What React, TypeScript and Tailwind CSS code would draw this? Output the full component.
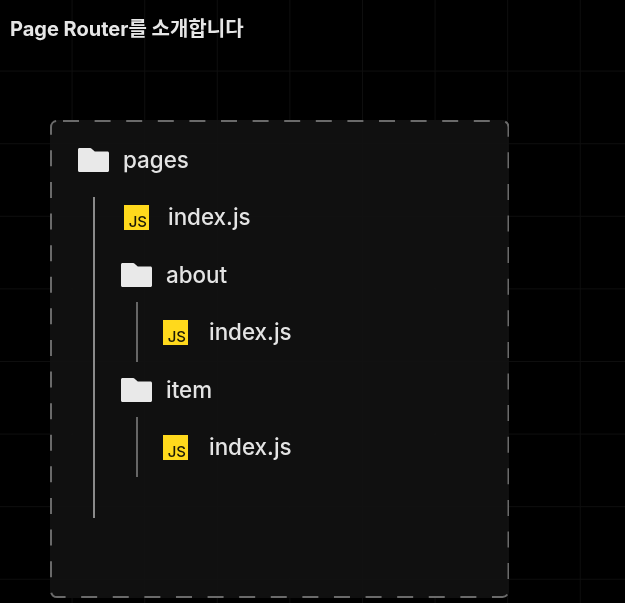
import React from "react";

function Folder() {
  return (
    <svg width="31" height="24" viewBox="0 0 31 24" className="shrink-0">
      <path d="M1.5 0H12C12.8 0 13.4 .3 13.9 .9L16.8 3.6H29.5C30.3 3.6 31 4.3 31 5.1V22.5C31 23.3 30.3 24 29.5 24H1.5C.7 24 0 23.3 0 22.5V1.5C0 .7 .7 0 1.5 0Z" fill="#e9e9e9" />
    </svg>
  );
}

function JsIcon() {
  return (
    <div className="w-[25px] h-[25px] shrink-0 bg-[#ffd91c] flex items-end justify-end pr-[2px] pb-[1px]">
      <span className="text-[#1c1a08] text-[15px] leading-[15px] font-medium">JS</span>
    </div>
  );
}

function FolderRow({ name, className }: { name: string; className: string }) {
  return (
    <div className={`h-10 flex items-center ${className}`}>
      <Folder />
      <span>{name}</span>
    </div>
  );
}

function FileRow({ className }: { className: string }) {
  return (
    <div className={`h-10 flex items-center ${className}`}>
      <JsIcon />
      <span>index.js</span>
    </div>
  );
}

function SubBranch({ className }: { className: string }) {
  return (
    <div className={`ml-[41px] py-[10px] border-l-2 border-[#666666] ${className}`}>
      <FileRow className="pl-[25px] gap-[21px]" />
    </div>
  );
}

export default function App() {
  return (
    <div
      className="w-[625px] h-[603px] overflow-hidden bg-black bg-[linear-gradient(to_right,#0e0e0e_1px,transparent_1px),linear-gradient(to_bottom,#0e0e0e_1px,transparent_1px)] bg-[size:72.6px_72.6px] bg-[position:-1px_-2px] text-[#e4e4e4] text-[22.4px] font-medium font-['Inter','Noto_Sans_CJK_KR',sans-serif] blur-[0.5px]"
    >
      <h1 className="pl-[10px] pt-[17px] h-[120px] text-[20px] leading-6 font-bold text-[#e6e6e6]">
        Page Router를 소개합니다
      </h1>
      <div className="relative ml-[50px] w-[459px] h-[478px] rounded-md bg-[#121212]/90 pt-[20px] pl-[28px]">
        <svg className="absolute left-0 top-0" width="459" height="478" fill="none">
          <rect x="1" y="1" width="457.5" height="476" rx="6" stroke="#6a6a6a" strokeWidth="2" strokeDasharray="16 15.6" strokeDashoffset="-6" />
        </svg>
        <FolderRow name="pages" className="gap-[14px]" />
        <div className="mt-[17px] ml-[15px] pb-[41px] border-l-2 border-[#8a8a8a]">
          <FileRow className="pl-[29px] gap-[19px]" />
          <FolderRow name="about" className="pl-[26px] gap-[14px] mt-[17.5px]" />
          <SubBranch className="mt-[7.5px]" />
          <FolderRow name="item" className="pl-[26px] gap-[14px] mt-2" />
          <SubBranch className="mt-[7px]" />
        </div>
      </div>
    </div>
  );
}
